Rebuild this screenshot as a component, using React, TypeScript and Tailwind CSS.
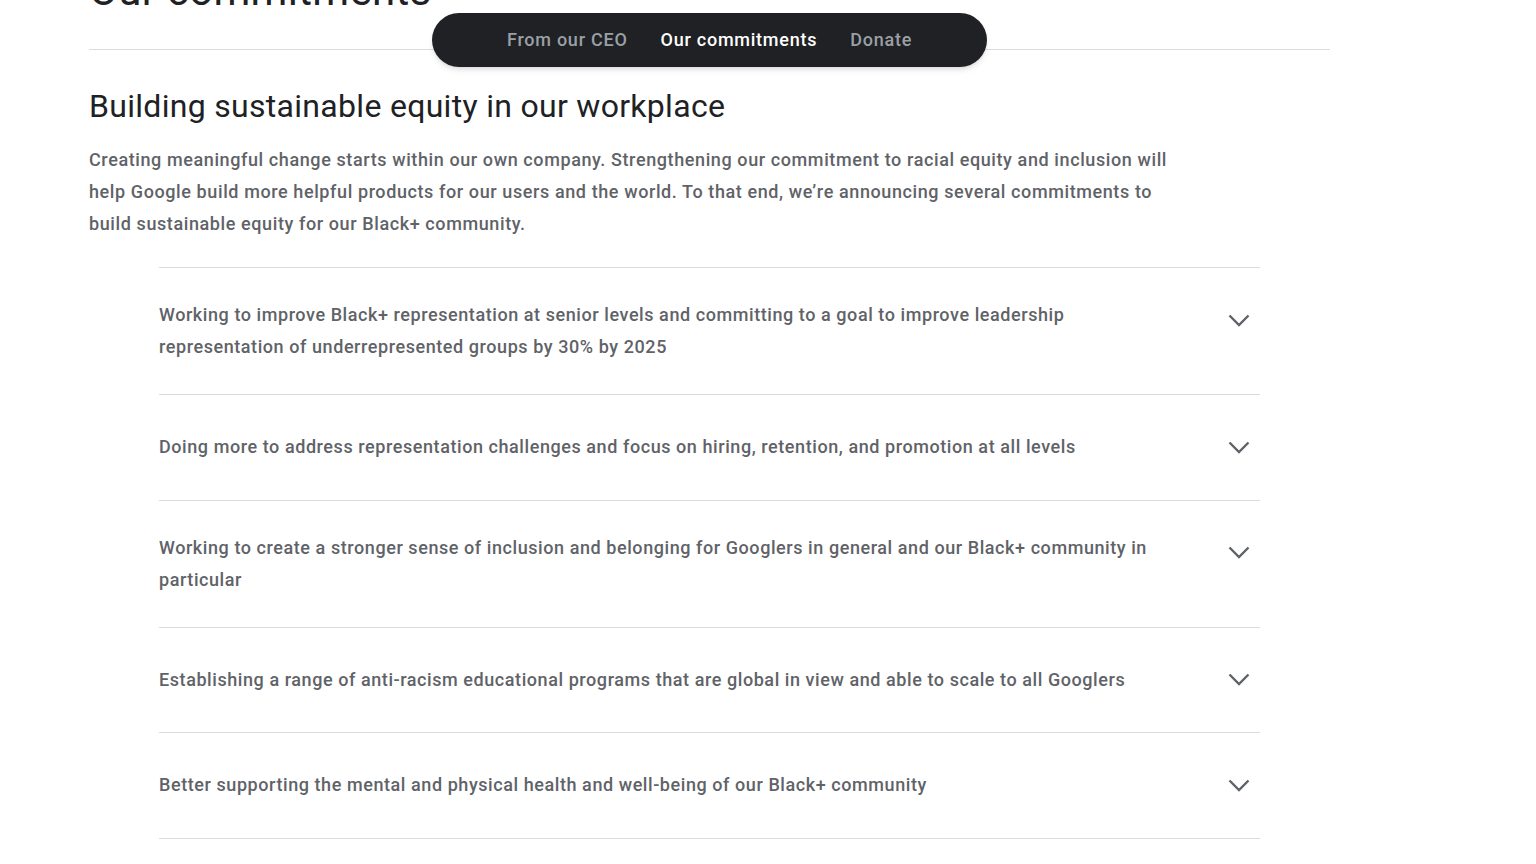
const ITEMS: string[][] = [
  [
    "Working to improve Black+ representation at senior levels and committing to a goal to improve leadership",
    "representation of underrepresented groups by 30% by 2025",
  ],
  ["Doing more to address representation challenges and focus on hiring, retention, and promotion at all levels"],
  [
    "Working to create a stronger sense of inclusion and belonging for Googlers in general and our Black+ community in",
    "particular",
  ],
  ["Establishing a range of anti-racism educational programs that are global in view and able to scale to all Googlers"],
  ["Better supporting the mental and physical health and well-being of our Black+ community"],
];

function Chevron() {
  return (
    <svg width="22" height="13" viewBox="0 0 22 13" fill="none" className="shrink-0">
      <path d="M1.5 1.5L11 11L20.5 1.5" stroke="#5f6368" strokeWidth="2.4" />
    </svg>
  );
}

export default function App() {
  return (
    <div
      className="relative min-h-[864px] overflow-hidden bg-white"
      style={{ fontFamily: "Roboto, 'Open Sans', sans-serif" }}
    >
      {/* Sticky nav pill */}
      <nav className="absolute left-[432px] top-[13px] z-10 flex h-[54px] w-[555px] items-center justify-center gap-[33px] rounded-full bg-[#202124] pb-[2px] text-[18px] font-medium tracking-[0.75px] shadow-md">
        <a className="text-[#9aa0a6]">From our CEO</a>
        <a className="text-white">Our commitments</a>
        <a className="text-[#9aa0a6]">Donate</a>
      </nav>

      <div className="w-[1241px] ml-[89px]">
        {/* Section title (scrolled off the top) */}
        <div className="-mt-[37px] border-b border-[#dadce0] pb-[30px]">
          <h2 className="text-[42px] leading-[56px] tracking-[0.3px] text-[#202124]">Our commitments</h2>
        </div>

        <h3 className="mt-[36px] text-[32px] leading-[40px] tracking-[0.3px] text-[#202124]">
          Building sustainable equity in our workplace
        </h3>
        <p className="mt-[18px] text-[18px] font-medium leading-8 tracking-[0.6px] text-[#5f6368]">
          Creating meaningful change starts within our own company. Strengthening our commitment to racial equity and inclusion will
          <br />
          help Google build more helpful products for our users and the world. To that end, we’re announcing several commitments to
          <br />
          build sustainable equity for our Black+ community.
        </p>

        {/* Accordion */}
        <div className="mx-[70px] mt-[27px] border-t border-[#dadce0]">
          {ITEMS.map((lines, i) => (
            <button
              key={i}
              className="flex min-h-[105.5px] w-full items-center border-b border-[#dadce0] py-[31px] text-left"
            >
              <span className="flex-1 text-[18px] font-medium leading-8 tracking-[0.57px] text-[#5f6368]">
                {lines.map((l, j) => (
                  <span key={j} className="block">
                    {l}
                  </span>
                ))}
              </span>
              <span className="mr-[10px] flex h-8 items-center self-start pt-[10px]">
                <Chevron />
              </span>
            </button>
          ))}
        </div>
      </div>
    </div>
  );
}
